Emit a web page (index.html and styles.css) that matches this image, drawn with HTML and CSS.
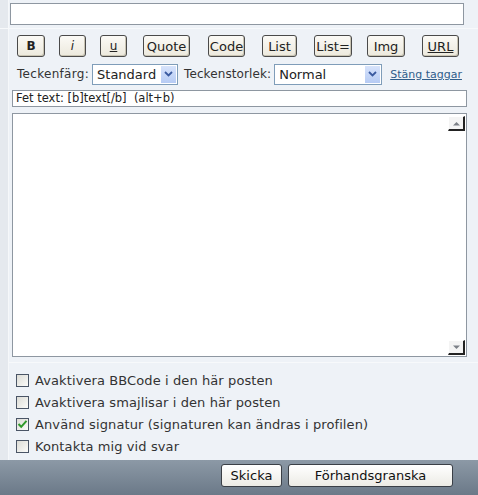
FILE: index.html
```html
<!DOCTYPE html>
<html>
<head>
<meta charset="utf-8">
<link rel="stylesheet" href="styles.css">
</head>
<body>
<div class="form">
  <div class="row row-subject">
    <div class="side"></div>
    <div class="main">
      <div class="subject"></div>
    </div>
  </div>
  <div class="row row-body">
    <div class="side"></div>
    <div class="main body-main">
      <div class="toolbar">
        <span class="btn b w28">B</span>
        <span class="btn i w27">i</span>
        <span class="btn u w27">u</span>
        <span class="btn w47">Quote</span>
        <span class="btn w37">Code</span>
        <span class="btn w35">List</span>
        <span class="btn w38">List=</span>
        <span class="btn w38">Img</span>
        <span class="btn url w37">URL</span>
      </div>
      <div class="fontrow">
        <span class="lbl">Teckenfärg:</span>
        <span class="select sel-color">Standard<span class="arrow"><svg width="9" height="6" viewBox="0 0 9 6"><path d="M1 1 L4.5 4.5 L8 1" fill="none" stroke="#3a5aa0" stroke-width="1.8"/></svg></span></span>
        <span class="lbl lbl2">Teckenstorlek:</span>
        <span class="select sel-size">Normal<span class="arrow"><svg width="9" height="6" viewBox="0 0 9 6"><path d="M1 1 L4.5 4.5 L8 1" fill="none" stroke="#3a5aa0" stroke-width="1.8"/></svg></span></span>
        <span class="close">Stäng taggar</span>
      </div>
      <div class="helpline">Fet text: [b]text[/b]&nbsp; (alt+b)</div>
      <div class="textarea">
        <div class="scroll">
          <span class="sbtn sup"><svg width="9" height="5" viewBox="0 0 9 5"><path d="M1 4.5 L4.5 1 L8 4.5 Z" fill="#7c8087"/></svg></span>
          <span class="sbtn sdown"><svg width="9" height="5" viewBox="0 0 9 5"><path d="M1 0.5 L4.5 4 L8 0.5 Z" fill="#7c8087"/></svg></span>
        </div>
      </div>
    </div>
  </div>
  <div class="row row-opts">
    <div class="side"></div>
    <div class="main opts">
      <label class="opt"><span class="cb"></span>Avaktivera BBCode i den här posten</label>
      <label class="opt"><span class="cb"></span>Avaktivera smajlisar i den här posten</label>
      <label class="opt"><span class="cb checked"><svg width="11" height="10" viewBox="0 0 11 10"><path d="M1.5 5 L4.2 7.8 L9.5 1.8" fill="none" stroke="#2f9a2a" stroke-width="2"/></svg></span>Använd signatur (signaturen kan ändras i profilen)</label>
      <label class="opt"><span class="cb"></span>Kontakta mig vid svar</label>
    </div>
  </div>
  <div class="bar">
    <span class="sbutton skicka">Skicka</span>
    <span class="sbutton preview">Förhandsgranska</span>
  </div>
</div>
</body>
</html>
```
FILE: styles.css
```css
html, body {
  margin: 0;
  padding: 0;
  background: #eef2f7;
}
body {
  font-family: "DejaVu Sans", Verdana, sans-serif;
  color: #333;
}
.form {
  width: 478px;
  height: 495px;
  display: flex;
  flex-direction: column;
  overflow: hidden;
}
.row {
  display: flex;
}
.side {
  width: 8px;
  background: #e5e9ee;
  border-right: 1px solid #f6f8fa;
  flex: none;
}
.main {
  flex: 1;
  background: #eef2f7;
}
.row-subject {
  height: 28px;
  border-bottom: 1px solid #f7f9fb;
}
.row-subject .main {
  padding: 3px 0 0 1px;
}
.subject {
  width: 452px;
  height: 20px;
  background: #fff;
  border: 1px solid #8e97a1;
}
.body-main {
  height: 333px;
  padding-left: 3px;
  border-bottom: 1px solid #f7f9fb;
}
.toolbar {
  display: flex;
  align-items: center;
  height: 22px;
  margin-top: 6px;
  padding-left: 5px;
}
.btn {
  box-sizing: border-box;
  height: 22px;
  border: 1px solid #4a4a4a;
  border-radius: 3px;
  background: linear-gradient(#fbfaf6, #ece9dd);
  font-size: 13px;
  color: #222;
  display: inline-flex;
  align-items: center;
  justify-content: center;
  margin-right: 0;
  box-shadow: inset -1px -1px 0 #c9c4b3;
}
.w28 { width: 28px; margin-right: 14px; }
.w27 { width: 27px; margin-right: 14px; }
.toolbar .u { margin-right: 16px; }
.w47 { width: 47px; margin-right: 18px; }
.w37 { width: 37px; margin-right: 17px; }
.w35 { width: 35px; margin-right: 17px; }
.w38 { width: 38px; margin-right: 15px; }
.toolbar .w38:nth-child(8) { margin-right: 17px; }
.b { font-weight: bold; font-size: 12px; }
.i { font-style: italic; font-size: 12px; }
.u { text-decoration: underline; font-size: 12px; }
.url { text-decoration: underline; }
.fontrow {
  display: flex;
  align-items: center;
  height: 22px;
  margin-top: 6px;
  padding-left: 5px;
  font-size: 12px;
  color: #333;
}
.lbl { margin-right: 3px; letter-spacing: 0.3px; }
.lbl2 { margin-left: 6px; margin-right: 3px; letter-spacing: 0.1px; }
.select {
  box-sizing: border-box;
  height: 21px;
  border: 1px solid #7f9db9;
  background: #fff;
  font-size: 13px;
  color: #222;
  display: inline-flex;
  align-items: center;
  padding-left: 4px;
  position: relative;
}
.sel-color { width: 86px; }
.sel-size { width: 108px; }
.arrow {
  position: absolute;
  right: 1px;
  top: 1px;
  width: 15px;
  height: 17px;
  background: linear-gradient(#d7e3fb, #b6cbf4);
  border: 0;
  display: flex;
  align-items: center;
  justify-content: center;
}
.close {
  margin-left: 8px;
  font-size: 11px;
  color: #2f5d8a;
  text-decoration: underline;
}
.helpline {
  box-sizing: border-box;
  width: 455px;
  height: 17px;
  margin-top: 5px;
  border: 1px solid #8e97a1;
  background: #fff;
  font-size: 11.5px;
  color: #222;
  padding-left: 3px;
  line-height: 15px;
}
.textarea {
  box-sizing: border-box;
  width: 455px;
  height: 244px;
  margin-top: 6px;
  border: 1px solid #8e97a1;
  background: #fff;
  display: flex;
  justify-content: flex-end;
}
.scroll {
  width: 17px;
  margin: 2px 1px 1px 0;
  display: flex;
  flex-direction: column;
  justify-content: space-between;
}
.sbtn {
  box-sizing: border-box;
  width: 17px;
  height: 15px;
  background: #f4f4f4;
  border-right: 2px solid #222;
  border-bottom: 2px solid #222;
  border-left: 1px solid #fff;
  border-top: 1px solid #fff;
  display: flex;
  align-items: center;
  justify-content: center;
}
.row-opts {
  height: 97px;
}
.opts {
  padding: 6px 0 0 7px;
}
.opt {
  display: flex;
  align-items: center;
  height: 22px;
  font-size: 13px;
  letter-spacing: 0.1px;
  color: #333;
}
.cb {
  box-sizing: border-box;
  width: 13px;
  height: 13px;
  border: 1px solid #4a5566;
  background: linear-gradient(135deg, #dcdcd6, #fbfbf9);
  margin-right: 6px;
  display: inline-flex;
  align-items: center;
  justify-content: center;
}
.bar {
  flex: 1;
  background: linear-gradient(#8c99a6, #6b7988);
  display: flex;
  align-items: flex-start;
  padding: 4px 0 0 221px;
}
.sbutton {
  box-sizing: border-box;
  height: 23px;
  border: 1px solid #3a3f46;
  border-radius: 3px;
  background: linear-gradient(#ffffff, #ecebe5);
  font-size: 13px;
  color: #111;
  display: inline-flex;
  align-items: center;
  justify-content: center;
}
.skicka { width: 61px; margin-right: 6px; }
.preview { width: 165px; }
```
